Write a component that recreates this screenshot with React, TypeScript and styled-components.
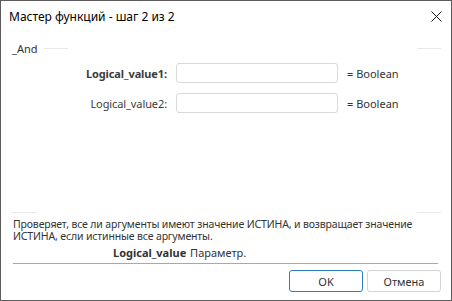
import styled, { createGlobalStyle } from 'styled-components';

const GlobalStyle = createGlobalStyle`
  html, body {
    margin: 0;
    padding: 0;
    background: #ffffff;
  }
  body {
    font-family: 'Segoe UI', 'Noto Sans', sans-serif;
  }
`;

interface Arg {
  name: string;
  type: string;
  active?: boolean;
}

const args: Arg[] = [
  { name: 'Logical_value1:', type: '= Boolean', active: true },
  { name: 'Logical_value2:', type: '= Boolean' },
];

const App = () => {
  return (
    <>
      <GlobalStyle />
      <StyledWindow>
        <StyledTitleBar>
          <span>Мастер функций - шаг 2 из 2</span>
          <StyledClose aria-label="close">
            <svg width="11" height="11" viewBox="0 0 11 11">
              <path d="M0.5 0.5 L10.5 10.5 M10.5 0.5 L0.5 10.5" stroke="#1a1a1a" strokeWidth="1" fill="none" />
            </svg>
          </StyledClose>
        </StyledTitleBar>

        <StyledBody>
          <StyledGroupHeader>
            <span>_And</span>
            <StyledFadeLine />
            <StyledGrow />
            <StyledFadeLine />
          </StyledGroupHeader>

          <StyledArgs>
            {args.map((arg) => (
              <StyledArgRow key={arg.name}>
                <StyledArgLabel $active={arg.active}>{arg.name}</StyledArgLabel>
                <StyledInput type="text" />
                <StyledArgType>{arg.type}</StyledArgType>
              </StyledArgRow>
            ))}
          </StyledArgs>

          <StyledGrow />

          <StyledSeparator>
            <StyledFadeLine />
            <StyledGrow />
            <StyledFadeLine />
          </StyledSeparator>

          <StyledDescription>
            Проверяет, все ли аргументы имеют значение ИСТИНА, и возвращает значение
            ИСТИНА, если истинные все аргументы.
          </StyledDescription>

          <StyledParam>
            <b>Logical_value</b> Параметр.
          </StyledParam>

          <StyledRule />

          <StyledFooter>
            <StyledButton $primary type="button">
              OK
            </StyledButton>
            <StyledButton type="button">Отмена</StyledButton>
          </StyledFooter>
        </StyledBody>
      </StyledWindow>
    </>
  );
};

const StyledWindow = styled.div`
  box-sizing: border-box;
  width: 452px;
  height: 301px;
  border: 1px solid #5c5c5c;
  background: #ffffff;
  display: flex;
  flex-direction: column;
  color: #333333;
`;

const StyledTitleBar = styled.div`
  height: 30px;
  flex-shrink: 0;
  display: flex;
  align-items: center;
  justify-content: space-between;
  padding-left: 8px;
  font-size: 12px;
  color: #000000;
`;

const StyledClose = styled.div`
  display: flex;
  margin-right: 9px;
  margin-top: 1px;
`;

const StyledBody = styled.div`
  flex: 1;
  display: flex;
  flex-direction: column;
  padding: 0 10px 8px 11px;
`;

const StyledGrow = styled.div`
  flex: 1;
`;

const StyledFadeLine = styled.div`
  width: 24px;
  height: 1px;
  background: #e8e8e8;
`;

const StyledGroupHeader = styled.div`
  margin-top: 10px;
  height: 14px;
  display: flex;
  align-items: center;
  font-size: 11px;
  color: #333333;

  span {
    margin-right: 7px;
  }
`;

const StyledArgs = styled.div`
  margin-top: 8px;
  display: flex;
  flex-direction: column;
  gap: 10px;
`;

const StyledArgRow = styled.div`
  display: grid;
  grid-template-columns: 155px 162px auto;
  column-gap: 9px;
  align-items: center;
  font-size: 11px;
`;

const StyledArgLabel = styled.label<{ $active?: boolean }>`
  text-align: right;
  font-weight: ${(p) => (p.$active ? 700 : 400)};
  color: #3c3c3c;
  letter-spacing: -0.1px;
`;

const StyledInput = styled.input`
  box-sizing: border-box;
  height: 20px;
  width: 162px;
  margin: 0;
  border: 1px solid #d9d9d9;
  border-radius: 3px;
  background: #ffffff;
  outline: none;
`;

const StyledArgType = styled.span`
  color: #333333;
`;

const StyledSeparator = styled.div`
  display: flex;
  align-items: center;
  height: 1px;
  margin-bottom: 5px;
`;

const StyledDescription = styled.div`
  font-size: 10.5px;
  letter-spacing: -0.15px;
  line-height: 12px;
  color: #333333;
  padding-left: 1px;
`;

const StyledParam = styled.div`
  margin-top: 4px;
  height: 14px;
  line-height: 14px;
  font-size: 11px;
  padding-left: 101px;
  color: #333333;
  margin-bottom: 3px;

  b {
    margin-right: 1px;
  }
`;

const StyledRule = styled.div`
  height: 1px;
  background: #a8a8a8;
  margin-right: 3px;
  margin-left: 1px;
`;

const StyledFooter = styled.div`
  margin-top: 6px;
  display: flex;
  justify-content: flex-end;
  gap: 4px;
`;

const StyledButton = styled.button<{ $primary?: boolean }>`
  box-sizing: border-box;
  width: 74px;
  height: 22px;
  margin: 0;
  padding: 0;
  border: 1px solid ${(p) => (p.$primary ? '#2c7cc0' : '#d4d4d4')};
  border-radius: 3px;
  background: #ffffff;
  font-family: 'Segoe UI', 'Noto Sans', sans-serif;
  font-size: 11px;
  color: #333333;
`;

export default App;
